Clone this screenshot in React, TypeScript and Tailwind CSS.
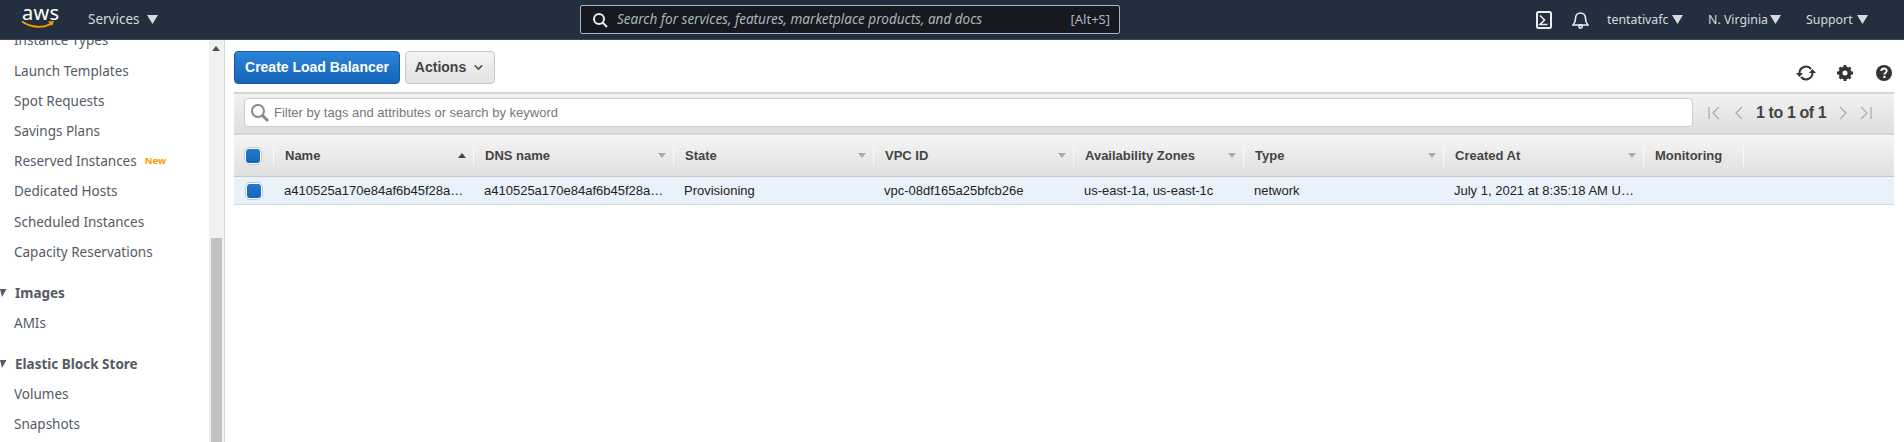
import { ChevronDown } from 'lucide-react'

const uiFont = 'font-["Noto_Sans","Open_Sans",sans-serif]'

const columns = [
  { label: 'Name', width: 'w-[200px]', value: 'a410525a170e84af6b45f28a…', sort: 'up' },
  { label: 'DNS name', width: 'w-[200px]', value: 'a410525a170e84af6b45f28a…', sort: 'down' },
  { label: 'State', width: 'w-[200px]', value: 'Provisioning', sort: 'down' },
  { label: 'VPC ID', width: 'w-[200px]', value: 'vpc-08df165a25bfcb26e', sort: 'down' },
  { label: 'Availability Zones', width: 'w-[170px]', value: 'us-east-1a, us-east-1c', sort: 'down' },
  { label: 'Type', width: 'w-[200px]', value: 'network', sort: 'down' },
  { label: 'Created At', width: 'w-[200px]', value: 'July 1, 2021 at 8:35:18 AM U…', sort: 'down' },
  { label: 'Monitoring', width: 'w-[100px]', value: '', sort: '' }
]

function Caret({ className = '' }: { className?: string }) {
  return (
    <svg width="11" height="9" viewBox="0 0 11 9" className={className}>
      <path d="M0 0h11L5.500 9z" fill="#d5dbdb" />
    </svg>
  )
}

function NavLink({ label, width }: { label: string; width: string }) {
  return (
    <div className={`flex items-center ${width}`}>
      <span className="text-[13px] text-[#d5dbdb] whitespace-nowrap scale-x-95 origin-left">{label}</span>
    </div>
  )
}

function Checkbox() {
  return (
    <div className="w-[18px] h-[18px] rounded-[5px] border border-[#c4c9cc] bg-white flex items-center justify-center">
      <div className="w-[14px] h-[14px] rounded-[3px] bg-gradient-to-b from-[#2279d0] to-[#1666b8]" />
    </div>
  )
}

function SideItem({ label, isNew }: { label: string; isNew?: boolean }) {
  return (
    <div className="h-[30.2px] pl-[14px] flex items-center text-[13.5px] text-[#545b64] whitespace-nowrap">
      {label}
      {isNew && <span className="ml-[8px] text-[9.5px] font-bold text-[#ff9900]">New</span>}
    </div>
  )
}

function SideHeading({ label }: { label: string }) {
  return (
    <div className="h-[30px] mt-[11px] flex items-center text-[13.5px] font-bold text-[#545b64] whitespace-nowrap">
      <svg width="7" height="8" viewBox="0 0 7 8" className="mr-[8px]">
        <path d="M0 0h6.500L2 8z" fill="#545b64" />
      </svg>
      {label}
    </div>
  )
}

function PagerIcon({ d }: { d: string }) {
  return (
    <svg width="12" height="14" viewBox="0 0 12 14" fill="none" stroke="#adadad" strokeWidth="1.300">
      <path d={d} />
    </svg>
  )
}

export default function App() {
  return (
    <div className={`w-[1904px] h-[442px] overflow-hidden bg-white flex flex-col ${uiFont}`}>
      {/* Top nav */}
      <div className="h-[40px] shrink-0 bg-[#232f3e] border-b border-[#3d4855] flex items-center relative z-10">
        <div className="w-[88px] pl-[21px] flex flex-col items-start">
          <span className="text-[20px] leading-[14px] text-white tracking-[0.3px] -mt-[5px] pl-[1px]">aws</span>
          <svg width="34" height="9" viewBox="0 0 34 9" className="mt-[0px]">
            <path d="M1 1.500C10 8 23 8.500 31 3" stroke="#ff9900" strokeWidth="1.800" fill="none" />
            <path d="M27 1.500l6-.5-2 5z" fill="#ff9900" />
          </svg>
        </div>
        <div className="flex items-center gap-[7px] w-[492px]">
          <span className="text-[13.5px] text-[#d5dbdb]">Services</span>
          <Caret />
        </div>
        <div className="w-[540px] h-[29px] rounded-[2px] border border-[#aab7b8] bg-[#16191f] flex items-center pl-[11px] pr-[9px]">
          <svg width="16" height="16" viewBox="0 0 16 16" fill="none" stroke="#eaeded" strokeWidth="2">
            <circle cx="7" cy="7" r="5" />
            <path d="M10.500 10.500L15 15" />
          </svg>
          <span className="ml-[9px] text-[13.5px] italic text-[#aab7b8] flex-1 whitespace-nowrap">
            Search for services, features, marketplace products, and docs
          </span>
          <span className="text-[13px] text-[#aab7b8]">[Alt+S]</span>
        </div>
        <div className="ml-[416px] flex items-center">
          <svg width="16" height="18" viewBox="0 0 16 18" fill="none" stroke="#eaeded" strokeWidth="2" className="mr-[20px]">
            <rect x="1" y="1" width="14" height="16" rx="1.500" />
            <path d="M4 4.500L8.500 9 4 13.500h7.500" strokeWidth="1.600" />
          </svg>
          <svg width="17" height="18" viewBox="0 0 17 18" fill="none" stroke="#eaeded" strokeWidth="1.600" className="mr-[18px]">
            <path d="M1 14h15c-2-2-2.500-3-2.500-6.500S11 2 8.500 2 3.500 4 3.500 7.500 3 12 1 14z" />
            <circle cx="8.500" cy="15.500" r="1.600" />
          </svg>
          <NavLink label="tentativafc" width="w-[65px]" />
          <Caret className="mr-[25px]" />
          <NavLink label="N. Virginia" width="w-[62px]" />
          <Caret className="mr-[25px]" />
          <NavLink label="Support" width="w-[51px]" />
          <Caret />
        </div>
      </div>

      <div className="flex flex-1 min-h-0">
        {/* Sidebar */}
        <div className="w-[209px] shrink-0 overflow-hidden">
          <div className="-mt-[14.5px]">
            <SideItem label="Instance Types" />
            <SideItem label="Launch Templates" />
            <SideItem label="Spot Requests" />
            <SideItem label="Savings Plans" />
            <SideItem label="Reserved Instances" isNew />
            <SideItem label="Dedicated Hosts" />
            <SideItem label="Scheduled Instances" />
            <SideItem label="Capacity Reservations" />
            <SideHeading label="Images" />
            <SideItem label="AMIs" />
            <SideHeading label="Elastic Block Store" />
            <SideItem label="Volumes" />
            <SideItem label="Snapshots" />
          </div>
        </div>

        {/* Scrollbar */}
        <div className="w-[16px] shrink-0 bg-[#f1f1f1] border-r border-[#d5dbdb] flex flex-col items-center pr-[1px]">
          <svg width="8" height="5" viewBox="0 0 8 5" className="mt-[6px]">
            <path d="M0 5h8L4 0z" fill="#505050" />
          </svg>
          <div className="w-[11px] h-[204px] bg-[#c1c1c1] mt-auto" />
        </div>

        {/* Main */}
        <div className="flex-1 min-w-0 pl-[9px] pr-[10px] font-['Liberation_Sans',Arial,sans-serif]">
          <div className="h-[52px] pt-[11px] flex items-start">
            <button className="w-[166px] h-[33px] rounded-[4px] border border-[#15589e] bg-gradient-to-b from-[#2a84d9] to-[#1465b8] text-white text-[14px] font-bold">
              Create Load Balancer
            </button>
            <button className="ml-[5px] w-[90px] h-[33px] rounded-[4px] border border-[#c6c6c6] bg-gradient-to-b from-[#f4f4f4] to-[#e3e3e3] text-[#444] text-[14px] font-bold flex items-center justify-center gap-[6px]">
              Actions
              <ChevronDown size={13} strokeWidth={3} color="#555" />
            </button>
            <div className="ml-auto mt-[13px] flex items-center">
              <svg width="20" height="18" viewBox="0 0 20 18" fill="none" stroke="#333" strokeWidth="2" className="mr-[21px]">
                <path d="M3.500 9a6.500 6.500 0 0 1 11.500-4" />
                <path d="M16.500 9a6.500 6.500 0 0 1-11.500 4" />
                <path d="M0 9h7L3.500 13z" fill="#333" stroke="none" />
                <path d="M13 9h7l-3.500-4z" fill="#333" stroke="none" />
              </svg>
              <svg width="16" height="16" viewBox="0 0 16 16" className="mr-[23px]">
                <circle cx="8" cy="8" r="4.500" fill="none" stroke="#333" strokeWidth="4" />
                <path d="M6.500 0h3v3h-3zM6.500 13h3v3h-3zM0 6.500h3v3H0zM13 6.500h3v3h-3zM1.500 3.500l2-2 2 2-2 2zM10.500 3.500l2-2 2 2-2 2zM1.500 12.500l2-2 2 2-2 2zM10.500 12.500l2-2 2 2-2 2z" fill="#333" />
              </svg>
              <svg width="16" height="16" viewBox="0 0 16 16" className="mr-[2px]">
                <circle cx="8" cy="8" r="8" fill="#333" />
                <path d="M5.300 6c0-3.300 5.400-3.300 5.400-.2 0 1.900-2.300 1.800-2.300 3.700" stroke="#fff" strokeWidth="1.900" fill="none" />
                <rect x="7.300" y="10.800" width="2.200" height="2.200" fill="#fff" />
              </svg>
            </div>
          </div>

          {/* Filter bar */}
          <div className="h-[43px] border-t-2 border-b-2 border-[#d5d5d5] bg-gradient-to-b from-[#f2f2f2] to-[#dedede] flex items-center pl-[10px] pb-[2px]">
            <div className="w-[1449px] h-[29px] rounded-[4px] border border-[#ccc] bg-white flex items-center pl-[5px]">
              <svg width="20" height="20" viewBox="0 0 20 20" fill="none" stroke="#8a8a8a">
                <circle cx="8" cy="8" r="6" strokeWidth="2" />
                <path d="M12.500 12.500L18 18" strokeWidth="3" />
              </svg>
              <span className="ml-[4px] text-[13px] text-[#777]">Filter by tags and attributes or search by keyword</span>
            </div>
            <div className="ml-[15px] flex items-center">
              <PagerIcon d="M1 1v12M11 1L5 7l6 6" />
              <div className="ml-[13px]">
                <PagerIcon d="M9 1L3 7l6 6" />
              </div>
              <span className="mx-[11px] text-[16px] font-bold text-[#444] tracking-[-0.4px]">1 to 1 of 1</span>
              <PagerIcon d="M3 1l6 6-6 6" />
              <div className="ml-[11px]">
                <PagerIcon d="M1 1l6 6-6 6M11 1v12" />
              </div>
            </div>
          </div>

          {/* Table head */}
          <div className="h-[42px] bg-gradient-to-b from-[#f5f5f5] to-[#e0e0e0] border-b border-[#c8c8c8] flex items-center">
            <div className="w-[40px] h-[20px] shrink-0 flex items-center pl-[10px] border-r border-[#f8f8f8]">
              <Checkbox />
            </div>
            {columns.map((col) => (
              <div
                key={col.label}
                className={`${col.width} h-[20px] shrink-0 flex items-center justify-between pl-[11px] pr-[7px] border-r border-[#f8f8f8] text-[13px] font-bold text-[#444]`}
              >
                {col.label}
                {col.sort === 'up' && (
                  <svg width="8" height="5" viewBox="0 0 8 5">
                    <path d="M0 5h8L4 0z" fill="#444" />
                  </svg>
                )}
                {col.sort === 'down' && (
                  <svg width="8" height="5" viewBox="0 0 8 5">
                    <path d="M0 0h8L4 5z" fill="#aaa" />
                  </svg>
                )}
              </div>
            ))}
          </div>

          {/* Row */}
          <div className="h-[28px] bg-[#e9f1fb] border-b border-[#d5dbdb] flex items-center">
            <div className="w-[40px] shrink-0 flex items-center pl-[11px]">
              <Checkbox />
            </div>
            {columns.map((col) => (
              <div key={col.label} className={`${col.width} shrink-0 pl-[10px] text-[13px] text-[#222] whitespace-nowrap`}>
                {col.value}
              </div>
            ))}
          </div>
        </div>
      </div>
    </div>
  )
}
